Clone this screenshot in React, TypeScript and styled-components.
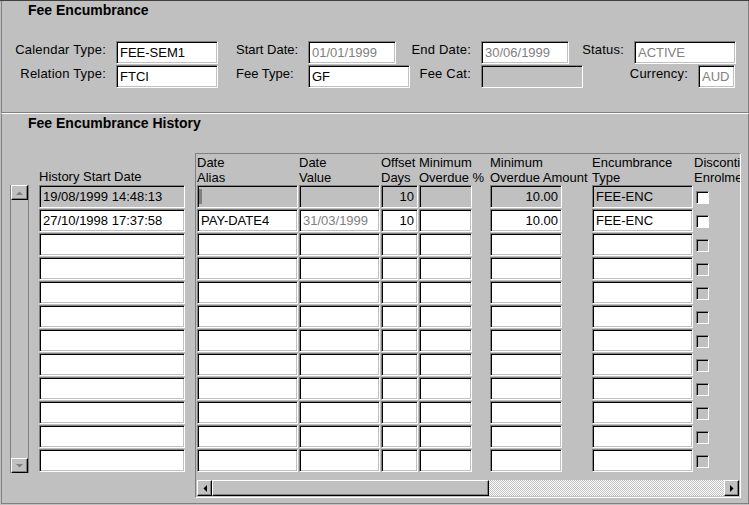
import React from "react";
import styled, { createGlobalStyle, css } from "styled-components";

const GlobalStyle = createGlobalStyle`
  html, body { margin: 0; padding: 0; background: #c0c0c0; }
  body { font-family: "Liberation Sans", Arial, sans-serif; font-size: 13px; color: #000; }
  * { box-sizing: border-box; }
`;

const Window = styled.div`
  width: 749px;
  height: 505px;
  background: #c0c0c0;
  display: flex;
  flex-direction: column;
  border-top: 1px solid #404040;
  overflow: hidden;
`;

const Section = styled.div<{ $h: number; $top?: boolean }>`
  height: ${(p) => p.$h}px;
  margin-left: 1px;
  border-left: 1px solid #808080;
  border-right: 1px solid #808080;
  border-bottom: 1px solid #808080;
  ${(p) => !p.$top && css`border-top: 1px solid #ffffff;`}
  display: flex;
  flex-direction: column;
  position: relative;
`;

const Title = styled.div<{ $mt: number }>`
  font-weight: bold;
  font-size: 14px;
  line-height: 16px;
  margin: ${(p) => p.$mt}px 0 0 26px;
`;

const FormRows = styled.div`
  display: flex;
  flex-direction: column;
  gap: 1px;
  margin-top: 23px;
`;

const FormRow = styled.div`
  display: flex;
  align-items: flex-start;
  height: 23px;
`;

const Label = styled.div<{ $w: number; $pr?: number; $left?: number }>`
  width: ${(p) => p.$w}px;
  text-align: ${(p) => (p.$left !== undefined ? "left" : "right")};
  padding-right: ${(p) => p.$pr ?? 10}px;
  padding-left: ${(p) => p.$left ?? 0}px;
  line-height: 15px;
  padding-top: 1px;
  white-space: nowrap;
  letter-spacing: ${(p) => (p.$left !== undefined ? "0" : "0.2px")};
`;

const sunken = css`
  border: 1px solid;
  border-color: #808080 #ffffff #ffffff #808080;
  box-shadow: inset 1px 1px 0 #000000, inset -1px -1px 0 #c0c0c0;
`;

const Field = styled.div<{ $w: number; $disabled?: boolean; $gray?: boolean }>`
  ${sunken}
  width: ${(p) => p.$w}px;
  height: 23px;
  background: ${(p) => (p.$gray ? "#c0c0c0" : "#ffffff")};
  color: ${(p) => (p.$disabled ? "#808080" : "#000")};
  padding: 2px 3px 0 3px;
  line-height: 17px;
  white-space: nowrap;
  overflow: hidden;
`;

const Body = styled.div`
  display: flex;
  margin-top: 6px;
`;

const VScroll = styled.div`
  margin-left: 8px;
  margin-top: 48px;
  width: 19px;
  height: 288px;
  border-left: 1px solid #808080;
  border-right: 1px solid #808080;
  display: flex;
  flex-direction: column;
  justify-content: space-between;
`;

const ScrollBtn = styled.div`
  width: 17px;
  height: 15px;
  background: #c0c0c0;
  border: 1px solid;
  border-color: #ffffff #000000 #000000 #ffffff;
  box-shadow: inset -1px -1px 0 #808080;
  display: flex;
  align-items: center;
  justify-content: center;
`;

const HistoryCol = styled.div`
  margin-left: 10px;
  margin-top: 29px;
  display: flex;
  flex-direction: column;
`;

const HistHeader = styled.div`
  height: 19px;
  line-height: 15px;
  padding-top: 3px;
`;

const CellStack = styled.div`
  display: flex;
  flex-direction: column;
  gap: 1px;
`;

const Cell = styled.div<{ $w: number; $gray?: boolean; $disabled?: boolean; $right?: boolean }>`
  ${sunken}
  width: ${(p) => p.$w}px;
  height: 23px;
  background: ${(p) => (p.$gray ? "#c0c0c0" : "#ffffff")};
  color: ${(p) => (p.$disabled ? "#808080" : "#000")};
  padding: 2px 3px 0 3px;
  line-height: 18px;
  white-space: nowrap;
  overflow: hidden;
  text-align: ${(p) => (p.$right ? "right" : "left")};
  position: relative;
`;

const Caret = styled.span`
  position: absolute;
  left: 1px;
  top: 3px;
  width: 3px;
  height: 15px;
  background: #808080;
`;

const Panel = styled.div`
  margin-left: 10px;
  margin-top: 16px;
  width: 546px;
  height: 345px;
  border: 1px solid;
  border-color: #808080 #ffffff #ffffff #808080;
  overflow: hidden;
  display: flex;
  flex-direction: column;
`;

const Grid = styled.div`
  display: grid;
  grid-template-columns: 101px 81px 37px 53px 16px 72px 28px 101px 40px;
  column-gap: 1px;
  padding-left: 1px;
`;

const HeadCell = styled.div`
  line-height: 15px;
  height: 31px;
  padding-top: 1px;
  white-space: nowrap;
`;

const Check = styled.div<{ $enabled?: boolean }>`
  width: 13px;
  height: 13px;
  margin: 6px 0 0 2px;
  border: 1px solid;
  border-color: #808080 #ffffff #ffffff #808080;
  box-shadow: inset 1px 1px 0 #000000;
  background: ${(p) => (p.$enabled ? "#ffffff" : "#c0c0c0")};
`;

const RowWrap = styled.div`
  height: 24px;
`;

const HScroll = styled.div`
  margin: 7px 0 0 1px;
  height: 16px;
  display: flex;
  width: 542px;
`;

const HBtn = styled.div`
  width: 15px;
  height: 16px;
  border: 1px solid;
  border-color: #ffffff #000000 #000000 #ffffff;
  box-shadow: inset -1px -1px 0 #808080;
  display: flex;
  align-items: center;
  justify-content: center;
`;

const Thumb = styled.div`
  width: 277px;
  height: 16px;
  border: 1px solid;
  border-color: #ffffff #000000 #000000 #ffffff;
  box-shadow: inset -1px -1px 0 #808080;
`;

const Track = styled.div`
  flex: 1;
  height: 16px;
  background-color: #ffffff;
  background-image: repeating-conic-gradient(#c0c0c0 0% 25%, #ffffff 0% 50%);
  background-size: 2px 2px;
`;

const Arrow = ({ dir, color }: { dir: "up" | "down" | "left" | "right"; color: string }) => {
  const pts = {
    up: "0,4 7,4 3.5,0.5",
    down: "0,0 7,0 3.5,3.5",
    left: "4,0 4,7 0.5,3.5",
    right: "0,0 0,7 3.5,3.5",
  }[dir];
  const vertical = dir === "up" || dir === "down";
  return (
    <svg width={vertical ? 7 : 4} height={vertical ? 4 : 7} viewBox={vertical ? "0 0 7 4" : "0 0 4 7"}>
      <polygon points={pts} fill={color} />
    </svg>
  );
};

type Row = {
  hist: string;
  alias?: string;
  value?: string;
  days?: string;
  amount?: string;
  type?: string;
};

const rows: Row[] = [
  { hist: "19/08/1999 14:48:13", days: "10", amount: "10.00", type: "FEE-ENC" },
  { hist: "27/10/1998 17:37:58", alias: "PAY-DATE4", value: "31/03/1999", days: "10", amount: "10.00", type: "FEE-ENC" },
  ...Array.from({ length: 10 }, () => ({ hist: "" })),
];

export default function App() {
  return (
    <>
      <GlobalStyle />
      <Window>
        <Section $h={112} $top>
          <Title $mt={1}>Fee Encumbrance</Title>
          <FormRows>
            <FormRow>
              <Label $w={114}>Calendar Type:</Label>
              <Field $w={102}>FEE-SEM1</Field>
              <Label $w={90} $left={18}>Start Date:</Label>
              <Field $w={88} $disabled>01/01/1999</Field>
              <Label $w={85}>End Date:</Label>
              <Field $w={88} $disabled>30/06/1999</Field>
              <Label $w={65}>Status:</Label>
              <Field $w={102} $disabled>ACTIVE</Field>
            </FormRow>
            <FormRow>
              <Label $w={114}>Relation Type:</Label>
              <Field $w={102}>FTCI</Field>
              <Label $w={90} $left={18}>Fee Type:</Label>
              <Field $w={102}>GF</Field>
              <Label $w={71}>Fee Cat:</Label>
              <Field $w={102} $gray />
              <Label $w={115}>Currency:</Label>
              <Field $w={37} $disabled>AUD</Field>
            </FormRow>
          </FormRows>
        </Section>
        <Section $h={391}>
          <Title $mt={1}>Fee Encumbrance History</Title>
          <Body>
            <VScroll>
              <ScrollBtn>
                <Arrow dir="up" color="#808080" />
              </ScrollBtn>
              <ScrollBtn>
                <Arrow dir="down" color="#808080" />
              </ScrollBtn>
            </VScroll>
            <HistoryCol>
              <HistHeader>History Start Date</HistHeader>
              <CellStack>
                {rows.map((r, i) => (
                  <Cell key={i} $w={146} $gray={i === 0}>
                    {r.hist}
                  </Cell>
                ))}
              </CellStack>
            </HistoryCol>
            <Panel>
              <Grid>
                <HeadCell>Date<br />Alias</HeadCell>
                <HeadCell>Date<br />Value</HeadCell>
                <HeadCell>Offset<br />Days</HeadCell>
                <HeadCell>Minimum<br />Overdue %</HeadCell>
                <HeadCell />
                <HeadCell>Minimum<br />Overdue Amount</HeadCell>
                <HeadCell />
                <HeadCell>Encumbrance<br />Type</HeadCell>
                <HeadCell>Discontinue<br />Enrolment</HeadCell>
                {rows.map((r, i) => (
                  <React.Fragment key={i}>
                    <RowWrap>
                      <Cell $w={101} $gray={i === 0}>
                        {i === 0 && <Caret />}
                        {r.alias}
                      </Cell>
                    </RowWrap>
                    <RowWrap>
                      <Cell $w={81} $gray={i === 0} $disabled>{r.value}</Cell>
                    </RowWrap>
                    <RowWrap>
                      <Cell $w={37} $gray={i === 0} $right>{r.days}</Cell>
                    </RowWrap>
                    <RowWrap>
                      <Cell $w={53} $gray={i === 0} />
                    </RowWrap>
                    <RowWrap />
                    <RowWrap>
                      <Cell $w={72} $gray={i === 0} $right>{r.amount}</Cell>
                    </RowWrap>
                    <RowWrap />
                    <RowWrap>
                      <Cell $w={101} $gray={i === 0}>{r.type}</Cell>
                    </RowWrap>
                    <RowWrap>
                      <Check $enabled={i < 2} />
                    </RowWrap>
                  </React.Fragment>
                ))}
              </Grid>
              <HScroll>
                <HBtn>
                  <Arrow dir="left" color="#000" />
                </HBtn>
                <Thumb />
                <Track />
                <HBtn>
                  <Arrow dir="right" color="#000" />
                </HBtn>
              </HScroll>
            </Panel>
          </Body>
        </Section>
      </Window>
    </>
  );
}
